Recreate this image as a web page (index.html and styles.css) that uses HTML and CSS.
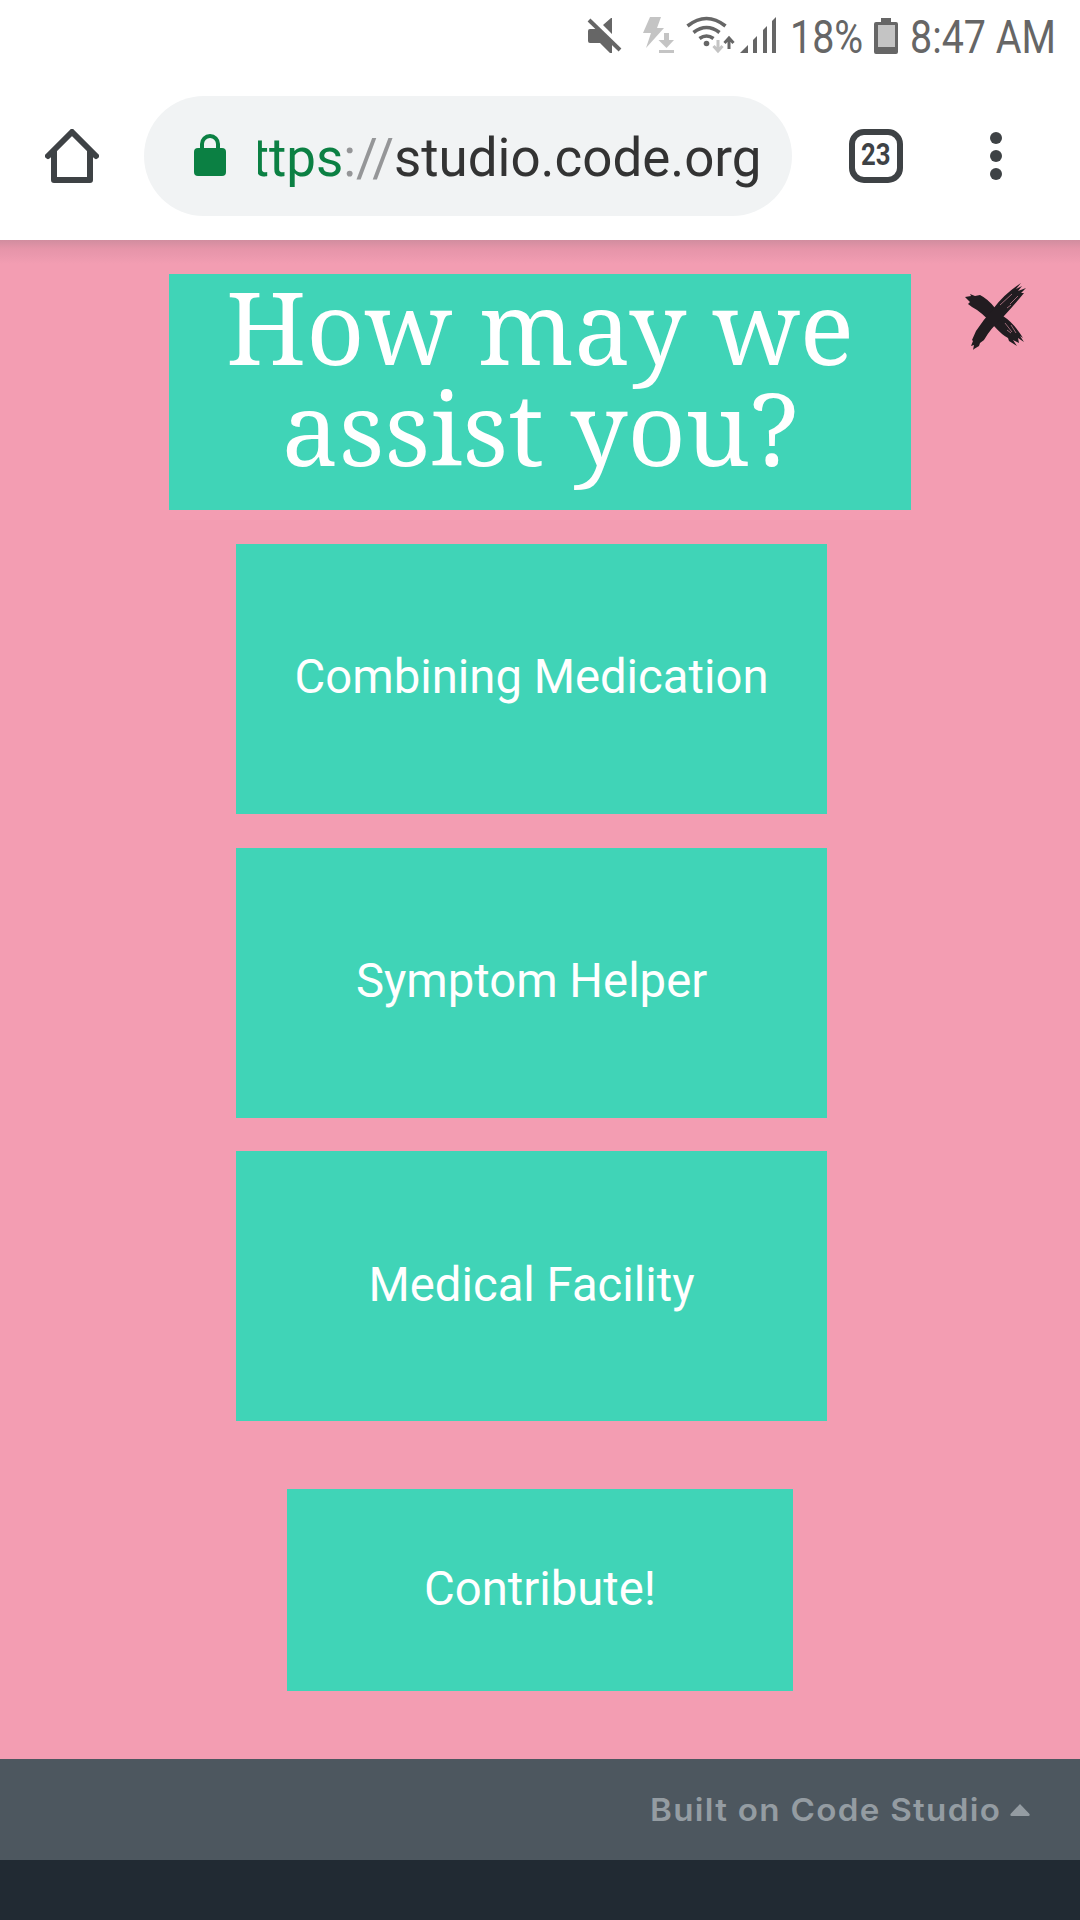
FILE: index.html
```
<!DOCTYPE html>
<html lang="en">
<head>
    <meta charset="UTF-8">
    <meta name="viewport" content="width=device-width, initial-scale=1.0">
    <title>How may we assist you?</title>
    <link rel="stylesheet" href="styles.css">
</head>
<body>

<!-- Status bar -->
<div class="status-bar">
    <svg class="status-icons" width="200" height="72" viewBox="0 0 200 72">
        <!-- muted speaker -->
        <path fill="#666" d="M10 29h7L32 44v9h-2L20 43H10q-2 0-2-2V31q0-2 2-2zM23 25l8-7h1v16z"/>
        <path d="M9 20l31 30" stroke="#666" stroke-width="4" fill="none"/>
        <!-- power / download -->
        <path fill="#c4c4c4" d="M70 17h11l-4 11h7L66 48l5-15h-8zM84 33h5v7h5l-7.500 8-8-8h5.500zM79 50h15v3H79z"/>
        <!-- wifi -->
        <g fill="none" stroke="#666" stroke-width="3.600">
            <path d="M107.500 26q19-15 38 0M113.500 32.500q13-10 26 0M119.500 38.500q7-5 14 0"/>
        </g>
        <circle cx="126.500" cy="43.500" r="2.800" fill="#666"/>
        <path d="M138 40v10M133.500 46l4.500 5 4.500-5" fill="none" stroke="#c4c4c4" stroke-width="3"/>
        <path d="M149 49V39M144.500 43l4.500-5 4.500 5" fill="none" stroke="#666" stroke-width="3"/>
        <!-- signal -->
        <path fill="#666" d="M160 53l8-8v8zM173 40l4-4v17h-4zM183 30l4-4v27h-4zM192 21l4-4v36h-4z"/>
    </svg>
    <span class="status-text battery-level">18%</span>
    <svg class="battery" width="24" height="36" viewBox="0 0 24 36">
        <path fill="#666" d="M7 0h10v4h5q2 0 2 2v28q0 2-2 2H2q-2 0-2-2V6q0-2 2-2h5z"/>
        <path fill="#c4c4c4" d="M4 7h17v22H4z"/>
    </svg>
    <span class="status-text clock">8:47 AM</span>
</div>

<!-- Browser toolbar -->
<div class="toolbar">
    <svg class="home-icon" width="54" height="54" viewBox="0 0 54 54">
        <path d="M3 27L27 3l24 24M9 22v29h36V22" fill="none" stroke="#3e4245" stroke-width="6" stroke-linecap="round" stroke-linejoin="round"/>
    </svg>
    <div class="address-bar">
        <svg class="lock-icon" width="32" height="42" viewBox="0 0 32 42">
            <path d="M8 16v-6a8 8 0 0 1 16 0v6" fill="none" stroke="#0b8043" stroke-width="4"/>
            <rect y="14" width="32" height="28" rx="4" fill="#0b8043"/>
        </svg>
        <div class="url"><span class="scheme">https</span><span class="slashes">://</span>studio.code.org</div>
    </div>
    <div class="tab-count"><span>23</span></div>
    <div class="menu-dots"><i></i><i></i><i></i></div>
</div>

<!-- App screen -->
<div class="app">
    <h1 class="title"><span>How may we</span><span>assist you?</span></h1>
    <svg class="close-icon" width="64" height="70" viewBox="0 0 64 70">
        <path fill="#211c20" d="M1 15l6-1-1-2 5 2 5-1Q24 17 31 26L39 34Q50 41 59 56l-3-2 4 6-6-4 1 5-6-3 4 6-8-5-1-3Q38 53 30 44 18 30 8 25l-4-3 2-2z"/>
        <path fill="#211c20" d="M9 68l1-5-3 1 2-5-1-1 4-9Q20 37 29 27 40 12 57 1l-5 6 6-3-4 5 8-3-5 5 3 0Q52 21 40 34 26 47 20 58l-4 3-1 3-5 3z"/>
        <path d="M36 23l12-11M46 22l8-8M43 26l4-3M41 41l7 9M43 48l4 3M47 43l5 8" fill="none" stroke="#f39db2" stroke-width=".6"/>
    </svg>
    <button class="option">Combining Medication</button>
    <button class="option">Symptom Helper</button>
    <button class="option">Medical Facility</button>
    <button class="option contribute">Contribute!</button>
</div>

<div class="footer">
    <span class="footer-text">Built on Code Studio</span>
    <svg class="arrow-up" width="20" height="12" viewBox="0 0 20 12">
        <path fill="#949ca2" d="M10 0l9.500 10q.5 2-1 2h-17q-1.500 0-1-2z"/>
    </svg>
</div>

</body>
</html>
```
FILE: styles.css
```
body {
    font-family: Roboto, "Liberation Sans", sans-serif;
    margin: 0;
    height: 1920px;
    background-color: #212a33;
    overflow: hidden;
}

/* Status bar */
.status-bar {
    display: flex;
    height: 72px;
    padding-left: 580px;
    background-color: #fff;
    color: #666;
}

.status-icons {
    flex: none;
}

.status-text {
    font-size: 46px;
    line-height: 75px;
    white-space: nowrap;
    transform: scaleX(0.857);
    transform-origin: left;
}

.battery-level {
    width: 83px;
    margin-left: 10px;
}

.battery {
    flex: none;
    margin-top: 18px;
    margin-left: 1px;
}

.clock {
    margin-left: 12px;
}

/* Browser toolbar */
.toolbar {
    display: flex;
    align-items: center;
    box-sizing: border-box;
    height: 168px;
    padding-left: 45px;
    background-color: #fff;
}

.address-bar {
    display: flex;
    align-items: center;
    box-sizing: border-box;
    width: 648px;
    height: 120px;
    margin-left: 45px;
    padding-left: 50px;
    border-radius: 60px;
    background-color: #f1f3f4;
}

.lock-icon {
    margin-bottom: 2px;
}

.url {
    display: flex;
    justify-content: flex-end;
    width: 503.5px;
    margin-left: 32px;
    padding-top: 3px;
    overflow: hidden;
    font-size: 52.9px;
    line-height: 72px;
    color: #333;
}

.scheme {
    color: #0b8043;
}

.slashes {
    color: #959698;
}

.tab-count {
    display: flex;
    align-items: center;
    justify-content: center;
    box-sizing: border-box;
    width: 54px;
    height: 54px;
    margin-left: 57px;
    border: 6px solid #3e4245;
    border-radius: 15px;
    font-size: 31px;
    font-weight: bold;
    line-height: 40px;
    color: #3e4245;
}

.tab-count span {
    margin-bottom: 2px;
    transform: scaleX(0.83);
}

.menu-dots {
    display: flex;
    flex-direction: column;
    gap: 6px;
    margin-left: 87px;
}

.menu-dots i {
    width: 12px;
    height: 12px;
    border-radius: 50%;
    background-color: #3e4245;
}

/* App screen */
.app {
    position: relative;
    box-sizing: border-box;
    height: 1518.75px;
    padding-top: 33.75px;
    background: linear-gradient(#d18d9f, #e695a9 9px, #ea98ad 15px, #f39db2 24px) #f39db2;
}

.title {
    display: flex;
    flex-direction: column;
    align-items: center;
    box-sizing: border-box;
    width: 742.5px;
    height: 236.25px;
    margin: 0 0 33.75px 168.75px;
    padding-top: 2px;
    background-color: #40d4b7;
    color: #fff;
    font-family: "Noto Serif", "DejaVu Serif Condensed", "DejaVu Serif", serif;
    font-size: 101.25px;
    font-weight: normal;
    line-height: 101.25px;
    white-space: nowrap;
}

.close-icon {
    position: absolute;
    top: 42px;
    left: 964px;
}

.option {
    display: block;
    width: 590.625px;
    height: 270px;
    margin: 0 0 33.75px 236.25px;
    padding: 0 0 3px;
    border: none;
    background-color: #40d4b7;
    color: #fff;
    font-family: Roboto, "Liberation Sans", sans-serif;
    font-size: 47.25px;
}

.contribute {
    width: 506.25px;
    height: 202.5px;
    margin-top: 67.5px;
    margin-left: 286.875px;
    padding-bottom: 2px;
}

/* Footer */
.footer {
    display: flex;
    align-items: center;
    justify-content: flex-end;
    box-sizing: border-box;
    height: 101.25px;
    padding-right: 50px;
    background-color: #4d575f;
    color: #949ca2;
}

.footer-text {
    font-family: Inter, "Open Sans", sans-serif;
    font-size: 31px;
    font-weight: 600;
    letter-spacing: 1.2px;
    transform: scaleX(1.07);
    transform-origin: right;
}

.arrow-up {
    margin-top: 2px;
    margin-left: 9px;
}
```
